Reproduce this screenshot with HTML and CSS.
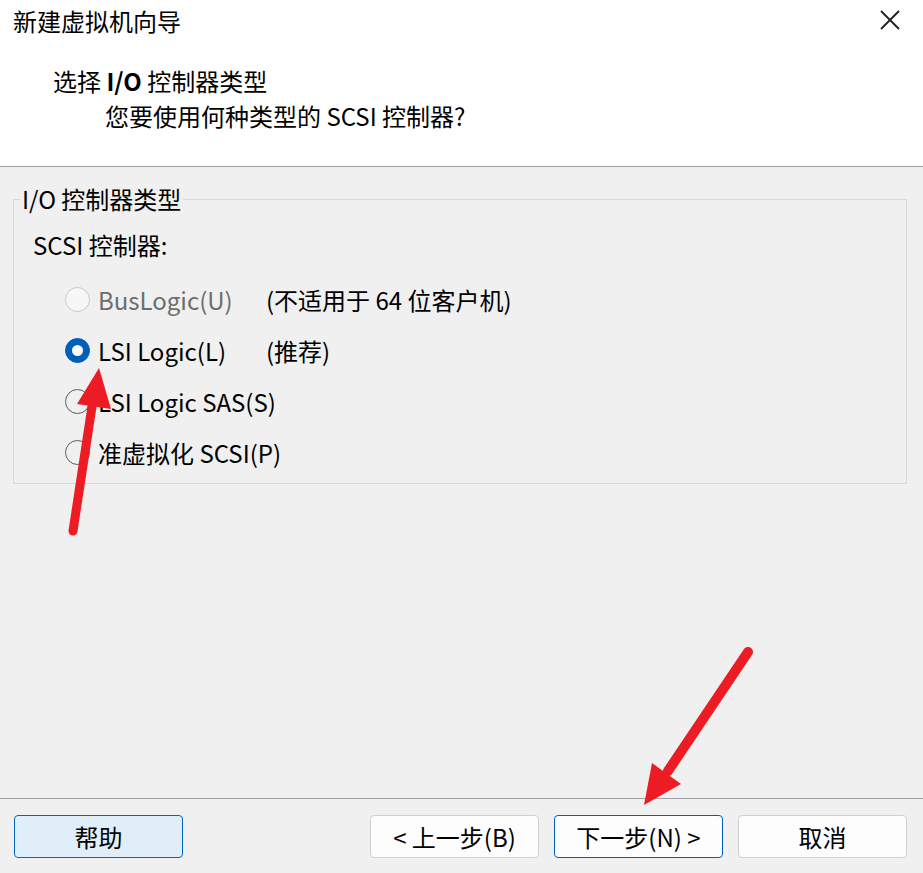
FILE: index.html
```html
<!DOCTYPE html>
<html lang="zh-CN">
<head>
  <meta charset="UTF-8">
  <title>新建虚拟机向导</title>
  <link rel="stylesheet" href="styles.css">
</head>
<body>
  <div class="window">
    <div class="header">
      <div class="titlebar">
        <span class="title">新建虚拟机向导</span>
        <svg class="close" width="20" height="20" viewBox="0 0 20 20">
          <path d="M1 1 L19 19 M19 1 L1 19" stroke="#1f1f1f" stroke-width="1.8" fill="none"/>
        </svg>
      </div>
      <div class="heading">选择 <b>I/O</b> 控制器类型</div>
      <div class="subheading">您要使用何种类型的 SCSI 控制器?</div>
    </div>

    <div class="content">
      <fieldset class="group">
        <legend>I/O 控制器类型</legend>
        <div class="group-label">SCSI 控制器:</div>
        <div class="options">
          <div class="option disabled">
            <span class="radio"></span>
            <span class="opt-name">BusLogic(U)</span>
            <span class="opt-note">(不适用于 64 位客户机)</span>
          </div>
          <div class="option checked">
            <span class="radio"></span>
            <span class="opt-name">LSI Logic(L)</span>
            <span class="opt-note">(推荐)</span>
          </div>
          <div class="option">
            <span class="radio"></span>
            <span class="opt-name">LSI Logic SAS(S)</span>
          </div>
          <div class="option">
            <span class="radio"></span>
            <span class="opt-name">准虚拟化 SCSI(P)</span>
          </div>
        </div>
      </fieldset>
    </div>

    <div class="footer">
      <button class="btn btn-help">帮助</button>
      <div class="nav">
        <button class="btn">&lt; 上一步(B)</button>
        <button class="btn btn-default">下一步(N) &gt;</button>
        <button class="btn">取消</button>
      </div>
    </div>

    <!-- annotation arrows drawn over the dialog -->
    <svg class="arrows" width="923" height="873" viewBox="0 0 923 873">
      <line x1="73" y1="531" x2="93" y2="400" stroke="#ed1c24" stroke-width="9" stroke-linecap="round"/>
      <polygon points="99,368 77,404 111,409" fill="#ed1c24"/>
      <line x1="748" y1="652" x2="668" y2="771" stroke="#ed1c24" stroke-width="10" stroke-linecap="round"/>
      <polygon points="644,805 652,763 681,784" fill="#ed1c24"/>
    </svg>
  </div>
</body>
</html>
```

FILE: styles.css
```css
body{
  margin:0;
  font-family:"Noto Sans CJK SC","Noto Sans",sans-serif;
  color:#000;
}
.window{
  position:relative;
  width:923px;
  height:873px;
  display:flex;
  flex-direction:column;
  background:#f0f0f0;
  overflow:hidden;
}
.header{
  height:166px;
  background:#fff;
  border-bottom:1px solid #a0a0a0;
}
.titlebar{
  height:42px;
  display:flex;
  align-items:center;
  justify-content:space-between;
  padding:0 23px 0 13px;
}
.title{
  font-size:24px;
  line-height:42px;
}
.close{
  margin-bottom:3px;
}
.heading{
  margin-top:24px;
  padding-left:53px;
  font-size:24px;
  line-height:30px;
}
.subheading{
  margin-top:5px;
  padding-left:105px;
  font-size:24px;
  line-height:30px;
}
.content{
  flex:1;
  padding:17px 16px 0 13px;
}
.group{
  margin:0;
  padding:0 0 5px 0;
  border:1px solid #d9d9d9;
  min-width:0;
}
.group legend{
  margin-left:6px;
  padding:0 2px;
  font-size:24px;
  line-height:30px;
}
.group-label{
  margin:16px 0 0 19px;
  font-size:24px;
  line-height:30px;
}
.options{
  margin-top:14px;
  padding-left:51px;
}
.option{
  height:51px;
  display:flex;
  align-items:center;
  font-size:24px;
  white-space:nowrap;
}
.radio{
  flex:none;
  width:25px;
  height:25px;
  box-sizing:border-box;
  border:1.5px solid #5c5c5c;
  border-radius:50%;
  margin-right:8px;
  display:flex;
  align-items:center;
  justify-content:center;
}
.opt-name{
  flex:none;
  min-width:168px;
}
.disabled .radio{
  border-color:#c8c8c8;
  background:#f7f7f7;
}
.disabled .opt-name{
  color:#6d6d6d;
}
.checked .radio{
  border-color:#005fb8;
  background:#005fb8;
}
.checked .radio::after{
  content:"";
  width:11px;
  height:11px;
  border-radius:50%;
  background:#fff;
}
.footer{
  height:74px;
  border-top:1px solid #a0a0a0;
  box-sizing:content-box;
  display:flex;
  justify-content:space-between;
  align-items:flex-start;
  padding:0 16px 0 14px;
}
.nav{
  display:flex;
  gap:15px;
}
.btn{
  margin-top:16px;
  width:169px;
  height:43px;
  box-sizing:border-box;
  background:#fdfdfd;
  border:1px solid #d0d0d0;
  border-radius:4px;
  font-family:"Noto Sans CJK SC","Noto Sans",sans-serif;
  font-size:24px;
  color:#000;
  padding:0;
}
.btn-help{
  background:#e0eef9;
  border-color:#0067c0;
}
.btn-default{
  border-color:#005fb8;
}
.arrows{
  position:absolute;
  left:0;
  top:0;
  pointer-events:none;
}
```
